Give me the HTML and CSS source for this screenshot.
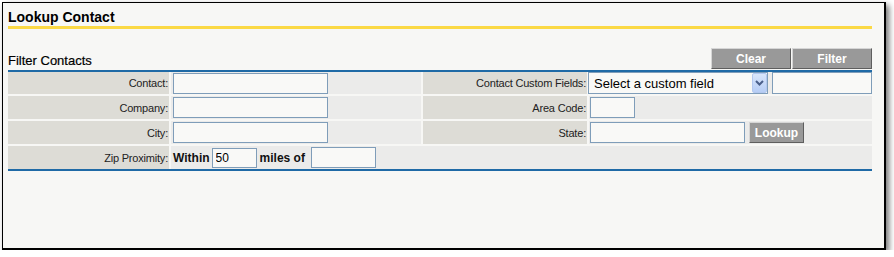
FILE: index.html
```html
<!DOCTYPE html>
<html>
<head>
<meta charset="utf-8">
<title>Lookup Contact</title>
<link rel="stylesheet" href="styles.css">
</head>
<body>
<div class="frame">
  <h1 class="title">Lookup Contact</h1>
  <div class="filter-head">
    <span class="filter-title">Filter Contacts</span>
    <div class="actions">
      <button class="btn btn-wide" type="button">Clear</button>
      <button class="btn btn-wide" type="button">Filter</button>
    </div>
  </div>
  <div class="grid">
    <div class="lbl">Contact:</div>
    <div class="fld"><input class="txt w155" type="text"></div>
    <div class="lbl">Contact Custom Fields:</div>
    <div class="fld fld-tight">
      <span class="select-wrap">
        <select class="sel"><option>Select a custom field</option></select>
        <span class="sel-arrow"><svg width="13" height="18" viewBox="0 0 13 18"><polyline points="3,7 6.5,10.5 10,7" fill="none" stroke="#4a5f8a" stroke-width="2"/></svg></span>
      </span>
      <input class="txt w100 tall" type="text">
    </div>

    <div class="lbl">Company:</div>
    <div class="fld"><input class="txt w155" type="text"></div>
    <div class="lbl">Area Code:</div>
    <div class="fld fld-1"><input class="txt w45" type="text"></div>

    <div class="lbl">City:</div>
    <div class="fld"><input class="txt w155" type="text"></div>
    <div class="lbl">State:</div>
    <div class="fld fld-1"><input class="txt w155" type="text"><button class="btn btn-lookup" type="button">Lookup</button></div>

    <div class="lbl">Zip Proximity:</div>
    <div class="fld fld-span">
      <span class="zip-text zip-within">Within</span>
      <input class="txt w45 short" type="text" value="50">
      <span class="zip-text zip-miles">miles of</span>
      <input class="txt w65 gap6" type="text">
    </div>
  </div>
</div>
</body>
</html>
```

FILE: styles.css
```css
html, body {
  margin: 0;
  padding: 0;
  background: #ffffff;
}

.frame {
  box-sizing: border-box;
  width: 884px;
  height: 248px;
  margin: 2px 0 0 2px;
  border: 1px solid #000;
  border-right-width: 2px;
  border-bottom-width: 2px;
  background: #f7f7f5;
  padding: 0 12px 0 5px;
  box-shadow: 3px 3px 6px rgba(0, 0, 0, 0.55);
  font-family: "Liberation Sans", Arial, sans-serif;
}

.title {
  margin: 6px 0 0 0;
  font-size: 14px;
  line-height: 17px;
  font-weight: bold;
  color: #000;
  border-bottom: 3px solid #fbd945;
}

.filter-head {
  display: flex;
  justify-content: space-between;
  align-items: flex-end;
  margin-top: 19px;
  padding-bottom: 1px;
  border-bottom: 2px solid #1f6aa6;
}

.filter-title {
  font-size: 13px;
  line-height: 15px;
  color: #000;
  margin-bottom: 1px;
  -webkit-text-stroke: 0.2px #000;
}

.actions {
  display: flex;
  gap: 1px;
}

.btn {
  box-sizing: border-box;
  background: #999999;
  border: 1px solid;
  border-color: #d6d6d6 #5e5e5e #5e5e5e #d6d6d6;
  color: #ffffff;
  font-family: "Liberation Sans", Arial, sans-serif;
  font-weight: bold;
  font-size: 12px;
  padding: 0;
  margin: 0;
}

.btn-wide {
  width: 80px;
  height: 21px;
}

.btn-lookup {
  width: 55px;
  height: 21px;
  margin-left: 4px;
}

.grid {
  display: grid;
  grid-template-columns: 161px 250px 164px 283px;
  grid-template-rows: 22px 23px 23px 23px;
  gap: 2px;
  border-bottom: 2px solid #1f6aa6;
}

.lbl {
  background: #dddcd6;
  text-align: right;
  font-size: 11px;
  letter-spacing: -0.2px;
  color: #222;
  padding-right: 1px;
  display: flex;
  align-items: center;
  justify-content: flex-end;
}

.fld {
  background: #ebebea;
  display: flex;
  align-items: center;
  padding-left: 2px;
}

.fld-tight {
  padding-left: 0;
  margin-left: -1px;
}

.fld-1 {
  padding-left: 1px;
}

.fld-span {
  grid-column: 2 / 5;
}

.txt {
  box-sizing: border-box;
  height: 21px;
  border: 1px solid #7f9db9;
  background: #f9f9f7;
  font-family: "Liberation Sans", Arial, sans-serif;
  font-size: 12px;
  padding: 0 3px;
  margin: 0;
  color: #000;
}

.tall { height: 22px; }
.short { height: 20px; }
.w155 { width: 155px; }
.w100 { width: 100px; }
.w45 { width: 45px; }
.w65 { width: 65px; }
.gap6 { margin-left: 6px; }

.select-wrap {
  position: relative;
  display: inline-block;
  width: 180px;
  height: 22px;
  margin-right: 4px;
}

.sel {
  appearance: none;
  -webkit-appearance: none;
  box-sizing: border-box;
  width: 180px;
  height: 22px;
  border: 1px solid #7f9db9;
  border-radius: 0;
  background: #f9f9f7;
  font-family: "Liberation Sans", Arial, sans-serif;
  font-size: 13px;
  color: #000;
  padding: 0 0 0 5px;
  margin: 0;
}

.sel-arrow {
  position: absolute;
  right: 1px;
  top: 1px;
  box-sizing: border-box;
  width: 15px;
  height: 20px;
  border: 1px solid #b3c8ef;
  border-radius: 2px;
  background: linear-gradient(#d9e6fb, #b6cdf5);
  display: flex;
  align-items: center;
  justify-content: center;
  pointer-events: none;
}

.zip-text {
  font-size: 12px;
  font-weight: bold;
  color: #111;
}

.zip-within {
  margin-right: 2px;
}

.zip-miles {
  margin-left: 3px;
}
```
